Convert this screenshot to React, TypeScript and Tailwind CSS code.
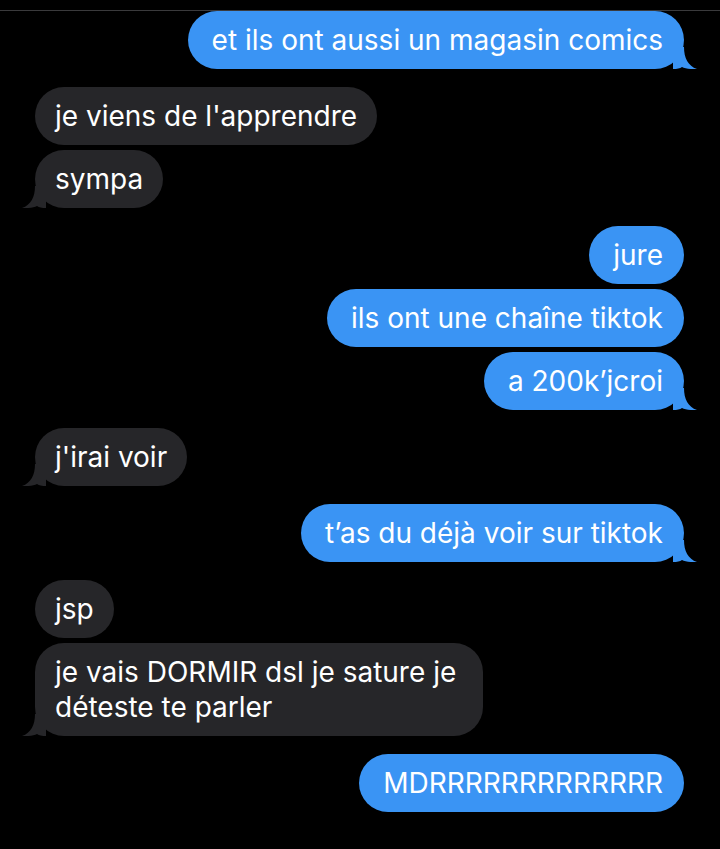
import React from "react";

type Msg = { text: string; me: boolean; tail?: boolean; gap?: boolean; wrap?: boolean };

const messages: Msg[] = [
  { text: "et ils ont aussi un magasin comics", me: true, tail: true },
  { text: "je viens de l'apprendre", me: false, gap: true },
  { text: "sympa", me: false, tail: true },
  { text: "jure", me: true, gap: true },
  { text: "ils ont une chaîne tiktok", me: true },
  { text: "a 200k’jcroi", me: true, tail: true },
  { text: "j'irai voir", me: false, tail: true, gap: true },
  { text: "t’as du déjà voir sur tiktok", me: true, tail: true, gap: true },
  { text: "jsp", me: false, gap: true },
  { text: "je vais DORMIR dsl je sature je déteste te parler", me: false, tail: true, wrap: true },
  { text: "MDRRRRRRRRRRRRR", me: true, gap: true },
];

function Tail({ me }: { me: boolean }) {
  return (
    <svg
      viewBox="0 0 24 22"
      className={
        me
          ? "absolute bottom-0 right-[-13px] w-[24px] h-[22px]"
          : "absolute bottom-0 left-[-13px] w-[24px] h-[22px] -scale-x-100"
      }
    >
      <path
        d="M0 0 H11 C11 11 15 19 24 22 C18 22.5 12 21.5 9 20 Q6 22 0 22 Z"
        fill={me ? "#3a94f4" : "#262629"}
      />
    </svg>
  );
}

function Bubble({ m }: { m: Msg }) {
  return (
    <div className={m.me ? "flex justify-end pr-[36px]" : "flex justify-start pl-[35px]"}>
      <div
        className={
          "relative rounded-[29px] py-[11.5px] text-[28px] leading-[35px] text-white " +
          (m.wrap ? "max-w-[448px] " : "whitespace-nowrap ") +
          (m.me ? "bg-[#3a94f4] pl-[24px] pr-[21px]" : "bg-[#262629] px-[20px]")
        }
      >
        {m.tail && <Tail me={m.me} />}
        <span className="relative">{m.text}</span>
      </div>
    </div>
  );
}

export default function App() {
  return (
    <div
      className="w-[720px] h-[849px] bg-black overflow-hidden"
      style={{ fontFamily: "Inter, 'Noto Sans', sans-serif" }}
    >
      <div className="h-[11px] border-b border-[#3a3a3c]" />
      <div className="flex flex-col">
        {messages.map((m, i) => (
          <div key={i} className={i === 0 ? "" : m.gap ? "mt-[18px]" : "mt-[5px]"}>
            <Bubble m={m} />
          </div>
        ))}
      </div>
    </div>
  );
}
